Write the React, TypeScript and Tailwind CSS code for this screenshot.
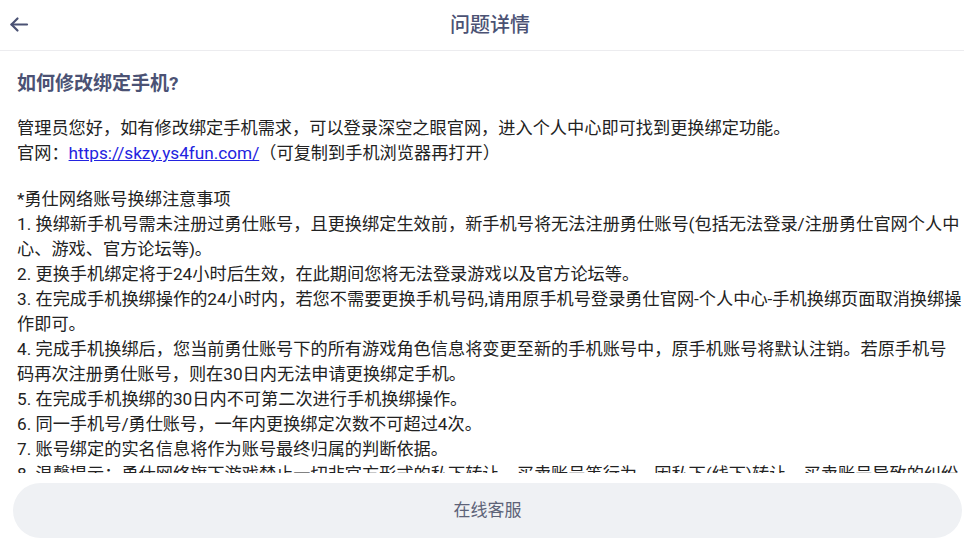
const lines: string[][] = [
  ["*勇仕网络账号换绑注意事项"],
  [
    "1. 换绑新手机号需未注册过勇仕账号，且更换绑定生效前，新手机号将无法注册勇仕账号(包括无法登录/注册勇仕官网个人中",
    "心、游戏、官方论坛等)。",
  ],
  ["2. 更换手机绑定将于24小时后生效，在此期间您将无法登录游戏以及官方论坛等。"],
  [
    "3. 在完成手机换绑操作的24小时内，若您不需要更换手机号码,请用原手机号登录勇仕官网-个人中心-手机换绑页面取消换绑操",
    "作即可。",
  ],
  [
    "4. 完成手机换绑后，您当前勇仕账号下的所有游戏角色信息将变更至新的手机账号中，原手机账号将默认注销。若原手机号",
    "码再次注册勇仕账号，则在30日内无法申请更换绑定手机。",
  ],
  ["5. 在完成手机换绑的30日内不可第二次进行手机换绑操作。"],
  ["6. 同一手机号/勇仕账号，一年内更换绑定次数不可超过4次。"],
  ["7. 账号绑定的实名信息将作为账号最终归属的判断依据。"],
  ["8. 温馨提示：勇仕网络旗下游戏禁止一切非官方形式的私下转让，买卖账号等行为，因私下(线下)转让，买卖账号导致的纠纷"],
];

export default function App() {
  return (
    <div className="h-[541px] w-full overflow-hidden bg-white font-['Roboto','Noto_Sans_CJK_SC',sans-serif]">
      <div className="flex h-full w-[980px] flex-col">
        <header className="relative flex h-[51px] shrink-0 items-center justify-center border-b border-[#ececef]">
          <button className="absolute left-[9px] top-[15px] text-[#4b5274]">
            <svg width="20" height="20" viewBox="0 0 20 20" fill="none" stroke="currentColor" strokeWidth={2.2} strokeLinecap="round" strokeLinejoin="round">
              <path d="M18 9.5H2.5" />
              <path d="M8.5 3.5L2.5 9.5L8.5 15.5" />
            </svg>
          </button>
          <h1 className="text-[20px] font-medium text-[#4b5274]">问题详情</h1>
        </header>

        <main className="min-h-0 flex-1 overflow-hidden px-[17px] pt-[20px]">
          <h2 className="text-[19px] font-bold leading-[25px] text-[#4b5274]">如何修改绑定手机?</h2>
          <div className="mt-[20px] text-[17.2px] leading-[25px] text-[#222]">
            <p className="whitespace-nowrap">管理员您好，如有修改绑定手机需求，可以登录深空之眼官网，进入个人中心即可找到更换绑定功能。</p>
            <p className="whitespace-nowrap">
              官网：<a href="#" className="text-[#2323e0] underline">https://skzy.ys4fun.com/</a>（可复制到手机浏览器再打开）
            </p>
            <div className="mt-[21px]">
              {lines.map((group, i) => (
                <p key={i}>
                  {group.map((l, j) => (
                    <span key={j} className="block whitespace-nowrap">{l}</span>
                  ))}
                </p>
              ))}
            </div>
          </div>
        </main>

        <footer className="shrink-0 pb-[3px] pl-[13px] pr-[18px] pt-[10px]">
          <button className="flex h-[55px] w-full items-center justify-center rounded-full bg-[#eff1f4] text-[17px] text-[#5d6378]">
            在线客服
          </button>
        </footer>
      </div>
    </div>
  );
}
